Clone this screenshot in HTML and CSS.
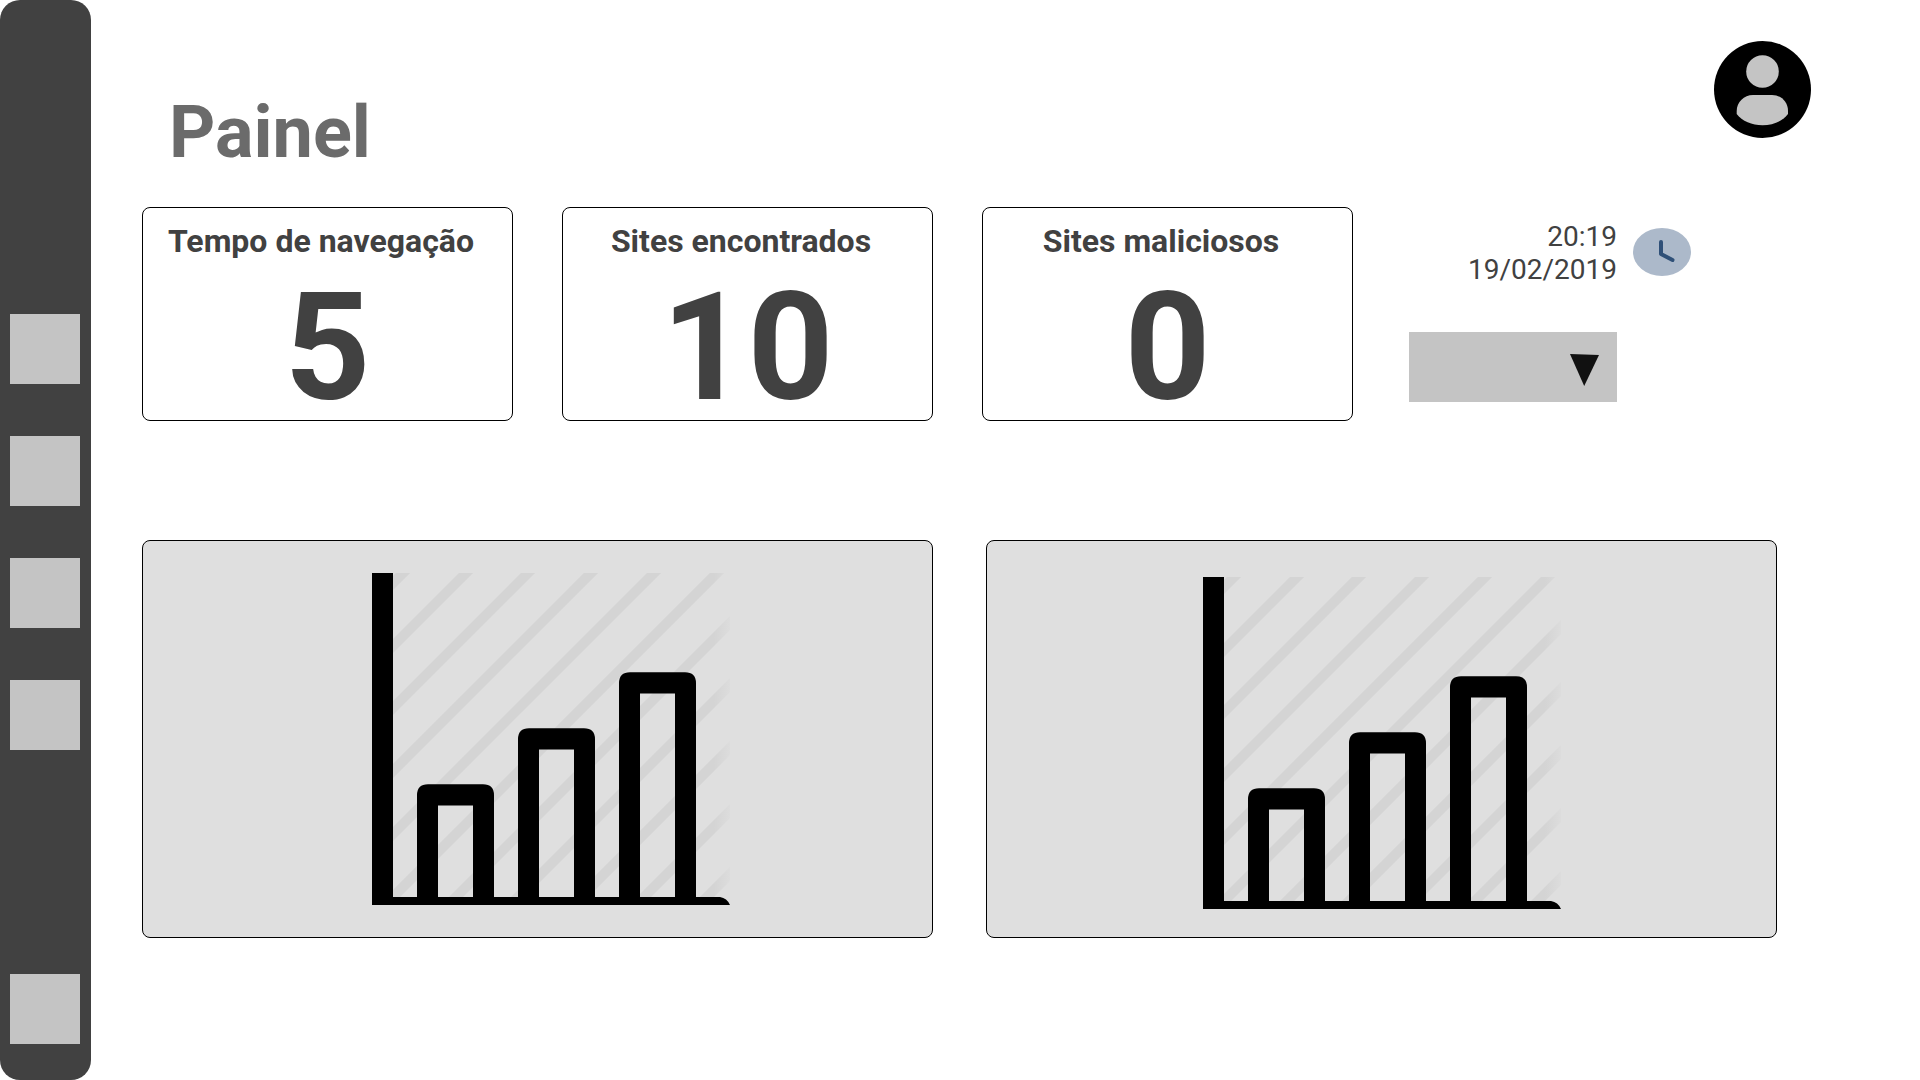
FILE: index.html
```html
<!DOCTYPE html>
<html lang="pt-BR">
<head>
  <meta charset="utf-8">
  <meta name="viewport" content="width=device-width, initial-scale=1">
  <title>Painel</title>
  <link rel="stylesheet" href="styles.css">
</head>
<body>
  <svg class="sprite" aria-hidden="true">
    <defs>
      <linearGradient id="stripe-fade" gradientUnits="userSpaceOnUse" x1="342" y1="0" x2="363" y2="0">
        <stop offset="0" stop-color="#d4d4d4"/>
        <stop offset="1" stop-color="#dfdfdf"/>
      </linearGradient>
      <symbol id="bar-chart" viewBox="0 0 358 332">
        <path fill="none" stroke="url(#stripe-fade)" stroke-width="10" d="M51-20l-400 400M114-20l-400 400M176-20l-400 400M239-20l-400 400M302-20l-400 400M365-20l-400 400M428-20l-400 400M490-20l-400 400M553-20l-400 400M616-20l-400 400M679-20l-400 400"/>
        <path d="M0 0H21V324H348Q355 325 358 332H0Z"/>
        <path d="M45 328V222.300Q45 211.300 56 211.300H111Q122 211.300 122 222.300V328H101V232.400H66V328Z"/>
        <path d="M146 328V166.300Q146 155.300 157 155.300H212Q223 155.300 223 166.300V328H202V176.400H167V328Z"/>
        <path d="M247 328V110.300Q247 99.300 258 99.300H313Q324 99.300 324 110.300V328H303V120.400H268V328Z"/>
      </symbol>
    </defs>
  </svg>

  <div class="app">
    <nav class="sidebar" aria-label="Menu">
      <button class="sidebar-item" type="button" aria-label="Item 1"></button>
      <button class="sidebar-item" type="button" aria-label="Item 2"></button>
      <button class="sidebar-item" type="button" aria-label="Item 3"></button>
      <button class="sidebar-item" type="button" aria-label="Item 4"></button>
      <button class="sidebar-item sidebar-item-last" type="button" aria-label="Item 5"></button>
    </nav>

    <main class="main">
      <header class="header">
        <h1 class="title">Painel</h1>
        <button class="avatar" type="button" aria-label="Perfil">
          <svg class="avatar-icon" viewBox="0 0 97 97" aria-hidden="true">
            <circle cx="48.500" cy="48.500" r="48.500"/>
            <g fill="#c4c4c4">
              <circle cx="48.500" cy="30.500" r="16.300"/>
              <path d="M39 54H58C67 54 74 61 74 70V73C69 80 59 84.300 48.500 84.300S28 80 22.700 73V70C22.700 61 30 54 39 54Z"/>
            </g>
          </svg>
        </button>
      </header>

      <div class="content">
        <div class="overview">
          <div class="stats">
            <section class="stat">
              <h2 class="stat-label">Tempo de navegação</h2>
              <p class="stat-value">5</p>
            </section>
            <section class="stat">
              <h2 class="stat-label">Sites encontrados</h2>
              <p class="stat-value">10</p>
            </section>
            <section class="stat">
              <h2 class="stat-label">Sites maliciosos</h2>
              <p class="stat-value">0</p>
            </section>
          </div>

          <aside class="side">
            <div class="clock">
              <time class="clock-text" datetime="2019-02-19T20:19">20:19<br>19/02/2019</time>
              <svg class="clock-icon" viewBox="0 0 58 48" aria-hidden="true">
                <ellipse cx="29" cy="24" rx="29" ry="24" fill="#acb9ca"/>
                <path d="M28 14V26L39.500 32" fill="none" stroke="#2f5078" stroke-width="4" stroke-linecap="round" stroke-linejoin="round"/>
              </svg>
            </div>
            <div class="filter">
              <select class="filter-select" aria-label="Filtro"><option></option></select>
              <svg class="filter-arrow" viewBox="0 0 29 32" aria-hidden="true"><path fill="#111" d="M0 0L29 1L14.200 32Z"/></svg>
            </div>
          </aside>
        </div>

        <div class="panels">
          <section class="panel panel-left">
            <svg class="chart" role="img" aria-label="Gráfico de barras"><use href="#bar-chart"/></svg>
          </section>
          <section class="panel panel-right">
            <svg class="chart" role="img" aria-label="Gráfico de barras"><use href="#bar-chart"/></svg>
          </section>
        </div>
      </div>
    </main>
  </div>
</body>
</html>
```

FILE: styles.css
```css
* {
  box-sizing: border-box;
}

body {
  margin: 0;
  background: #fff;
  color: #414141;
  font-family: Roboto, "Liberation Sans", sans-serif;
}

h1,
h2,
p {
  margin: 0;
}

.sprite {
  position: absolute;
  width: 0;
  height: 0;
}

.app {
  display: flex;
  min-height: 100vh;
}

/* Sidebar */

.sidebar {
  display: flex;
  flex: none;
  flex-direction: column;
  gap: 52px;
  width: 91px;
  padding: 314px 10px 36px;
  border-radius: 20px;
  background: #414141;
}

.sidebar-item {
  flex: none;
  width: 70px;
  height: 70px;
  padding: 0;
  border: 0;
  background: #c4c4c4;
}

.sidebar-item-last {
  margin-top: auto;
}

/* Header */

.main {
  flex: 1;
  min-width: 0;
  padding: 41px 109px 41px 51px;
}

.header {
  display: flex;
  align-items: flex-start;
  justify-content: space-between;
  padding-left: 27px;
}

.title {
  padding: 50px 0 32px;
  color: #6b6b6b;
  font-size: 72px;
  font-weight: 700;
  line-height: 84px;
}

.avatar {
  width: 97px;
  height: 97px;
  padding: 0;
  border: 0;
  border-radius: 50%;
  background: none;
}

.avatar-icon {
  display: block;
  width: 100%;
}

/* Statistics */

.content {
  padding-right: 34px;
}

.overview {
  display: flex;
  gap: 56px;
  margin-bottom: 119px;
}

.stats {
  display: grid;
  flex: 1;
  grid-template-columns: repeat(3, 1fr);
  gap: 49px;
}

.stat {
  padding: 14px 0 2px;
  border: 1px solid #000;
  border-radius: 8px;
  text-align: center;
}

.stat-label {
  padding-right: 13px;
  font-size: 32px;
  font-weight: 700;
  line-height: 38px;
}

.stat-value {
  margin-top: 18px;
  font-size: 150px;
  font-weight: 700;
  line-height: 140px;
}

/* Date and filter */

.side {
  flex: none;
  width: 368px;
  padding-top: 13px;
}

.clock {
  display: flex;
  align-items: center;
  gap: 16px;
  margin-bottom: 46px;
}

.clock-text {
  width: 208px;
  font-size: 28px;
  line-height: 33px;
  text-align: right;
}

.clock-icon {
  width: 58px;
  height: 48px;
  margin-bottom: 2px;
}

.filter {
  position: relative;
  width: 208px;
}

.filter-select {
  display: block;
  width: 100%;
  height: 70px;
  border: 0;
  border-radius: 0;
  background: #c4c4c4;
  appearance: none;
}

.filter-arrow {
  position: absolute;
  top: 22px;
  right: 18px;
  width: 29px;
  height: 32px;
  pointer-events: none;
}

/* Charts */

.panels {
  display: grid;
  grid-template-columns: repeat(2, 1fr);
  gap: 53px;
}

.panel {
  display: flex;
  align-items: center;
  justify-content: center;
  min-height: 398px;
  border: 1px solid #000;
  border-radius: 8px;
  background: #dfdfdf;
}

.panel-left {
  padding-left: 27px;
}

.panel-right {
  padding-top: 8px;
}

.chart {
  width: 358px;
  height: 332px;
}
```
